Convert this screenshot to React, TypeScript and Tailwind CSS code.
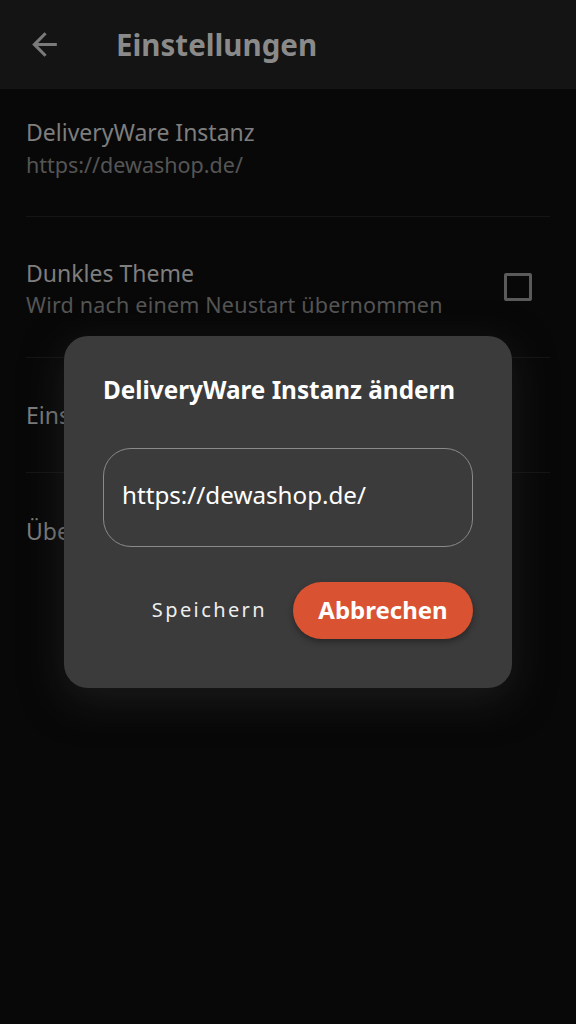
import React from "react";

const font = { fontFamily: '"Noto Sans", "Open Sans", sans-serif' };

export default function App() {
  return (
    <div className="relative w-[576px] h-[1024px] bg-[#080808] overflow-hidden" style={font}>
      <div className="h-[89px] bg-[#141414] flex items-center">
        <svg className="ml-[26px]" width="37" height="37" viewBox="0 0 24 24" fill="#7a7a7a">
          <path d="M20 11H7.83l5.59-5.59L12 4l-8 8 8 8 1.41-1.41L7.83 13H20v-2z" />
        </svg>
        <span className="ml-[53px] text-[29.5px] leading-[36px] font-bold text-[#8a8a8a]">Einstellungen</span>
      </div>
      <div className="flex flex-col">
        <div className="mx-[26px] h-[128px] border-b border-[#151515] flex flex-col pt-[27px]">
          <span className="text-[23px] leading-[32px] text-[#7e7e7e]">DeliveryWare Instanz</span>
          <span className="text-[21.5px] leading-[30px] text-[#555555] mt-[2px]">https://dewashop.de/</span>
        </div>
        <div className="mx-[26px] h-[141px] border-b border-[#151515] flex items-center justify-between">
          <div className="flex flex-col pt-[3px]">
            <span className="text-[23px] leading-[32px] text-[#7e7e7e]">Dunkles Theme</span>
            <span className="text-[21.5px] leading-[30px] text-[#555555] mt-[1px] tracking-[0.2px]">Wird nach einem Neustart übernommen</span>
          </div>
          <div className="w-[28px] h-[28px] border-[3px] border-[#5a5a5a] rounded-[2px] mr-[18px]" />
        </div>
        <div className="mx-[26px] h-[115px] border-b border-[#151515] flex items-center">
          <span className="text-[23px] leading-[32px] text-[#7e7e7e]">Einstellungen</span>
        </div>
        <div className="mx-[26px] h-[115px] flex items-center">
          <span className="text-[23px] leading-[32px] text-[#7e7e7e]">Über</span>
        </div>
      </div>

      <div className="absolute left-[64px] top-[336px] w-[448px] h-[352px] bg-[#3b3b3b] rounded-[24px] shadow-[0_12px_40px_rgba(40,40,40,0.6)] px-[39px] pt-[38px] flex flex-col">
        <div className="text-[24.3px] leading-[32px] font-bold text-white whitespace-nowrap">DeliveryWare Instanz ändern</div>
        <div className="mt-[42px] h-[99px] rounded-[28px] border border-[#8a8a8a] flex items-center pl-[18px]">
          <span className="text-[24.2px] leading-[32px] text-white -mt-[5px]">https://dewashop.de/</span>
        </div>
        <div className="mt-[35px] flex items-center justify-end">
          <span className="text-[20px] tracking-[2.4px] text-[#eeeeee] mr-[26px] -mt-[2px]">Speichern</span>
          <div className="h-[57px] w-[180px] rounded-full bg-[#d95232] flex items-center justify-center shadow-[0_3px_6px_rgba(0,0,0,0.35)]">
            <span className="text-[24px] leading-[32px] font-bold text-white -mt-[2px]">Abbrechen</span>
          </div>
        </div>
      </div>
    </div>
  );
}
